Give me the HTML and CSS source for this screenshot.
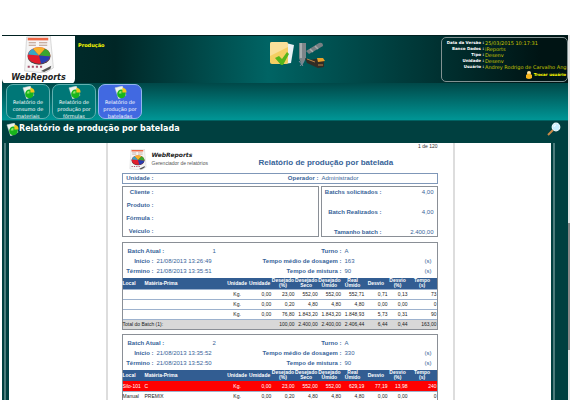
FILE: index.html
```html
<!DOCTYPE html>
<html lang="pt-BR">
<head>
<meta charset="utf-8">
<title>WebReports</title>
<link rel="stylesheet" href="styles.css">
</head>
<body>
<svg class="defs" aria-hidden="true">
  <symbol id="report" viewBox="0 0 30 36">
    <path d="M3 1 26 0 29 31 21 36 1 34Z" fill="#f5f5f5" stroke="#ccc" stroke-width=".7"/>
    <path d="M4 3h20" stroke="#e64" stroke-width="2.5"/>
    <path d="M5 6.500h7M15 6.500h8M5 9h7M15 9h8" stroke="#b98" stroke-width="1"/>
    <ellipse cx="15" cy="20" rx="11" ry="8" fill="#444"/>
    <ellipse cx="15" cy="19" rx="11" ry="8" fill="#e11d2c"/>
    <path d="M15 19 9 12.300Q15 9.500 21 12.300Z" fill="#f6b22a"/>
    <path d="M15 19 21 12.300Q26.500 15 26 20Z" fill="#3aa62f"/>
    <path d="M15 19 26 20Q24.500 25.500 17 26.900Z" fill="#263fb0"/>
    <path d="M15 19 4.200 18Q5 14.500 9 12.300Z" fill="#37a6c4"/>
    <path d="M4 30h2m2 0h2m2 0h2m2 0h2" stroke="#a6506a" stroke-width="2"/>
    <path d="M17 34 27 29 26 32 20 35Z" fill="#555"/>
  </symbol>
  <symbol id="sheet" viewBox="0 0 14 14">
    <path d="M1 2 9 0l4 10-8 4Z" fill="#eef3ee" stroke="#bcc" stroke-width=".5"/>
    <circle cx="8" cy="8.500" r="4.600" fill="#18b51c"/>
    <path d="M5 8a3.500 3.500 0 0 1 3-3v3Z" fill="#8fe86a"/>
    <path d="M9 7V2a5 5 0 0 1 4.500 5Z" fill="#f3c71d"/>
  </symbol>
</svg>
<div class="app">
  <header class="top">
    <div class="brand"><svg class="brand-pic"><use href="#report"/></svg><span>WebReports</span></div>
    <p class="module">Produção</p>
    <nav class="modules" aria-label="Módulos">
      <button type="button" aria-label="Relatórios"><svg width="26" height="26" viewBox="0 0 26 26">
        <path d="M17 3 25 5 22 23 15 24Z" fill="#e8f1f5"/>
        <rect x="1" y="2" width="18" height="22" rx="2" fill="#f4cf62"/>
        <path d="M1 4q0-2 2-2h14q2 0 2 2v3L1 16Z" fill="#fae09a"/>
        <path d="M6 18 10 16 13 19 18 12 20 14 14 25H12Z" fill="#56b51b"/>
      </svg></button>
      <button type="button" aria-label="Produção"><svg width="28" height="28" viewBox="0 0 28 28">
        <path d="M2 3h7v15L5 26 2 18Z" fill="#7d8589"/><path d="M3 3h2v15H3Z" fill="#a7acae"/>
        <path d="M9 11 22 3q4-1 4 3L12 14Z" fill="#777f83"/><path d="M13 9 16 12M18 6l3 3" stroke="#aaa" stroke-width="1.500"/>
        <path d="M8 18 12 20 19 19 27 19 27 27 21 28 10 23Z" fill="#332c24"/>
        <path d="M20 18h6l2 3-7 1Z" fill="#e7a12a"/><path d="M10 19 18 22M21 25h5" stroke="#b98448"/>
        <path d="M2 21 6 26M3 26 7 21" stroke="#789"/>
      </svg></button>
    </nav>
    <section class="session">
      <dl>
        <dt>Data da Versão :</dt><dd>25/03/2015 10:17:31</dd>
        <dt>Banco Dados :</dt><dd>iReports</dd>
        <dt>Tipo :</dt><dd>Desenv</dd>
        <dt>Unidade :</dt><dd>Desenv</dd>
        <dt>Usuário :</dt><dd>Andrey Rodrigo de Carvalho Ang</dd>
      </dl>
      <a href="#"><svg width="6" height="8" viewBox="0 0 6 8"><circle cx="3" cy="2" r="2" fill="#ffe6a5"/><path d="M0 7V4q3-3 6 0v3Q3 9 0 7Z" fill="#f5b51e"/></svg>Trocar usuário</a>
    </section>
  </header>
  <nav class="toolbar" aria-label="Relatórios">
    <button type="button"><svg><use href="#sheet"/></svg>Relatório de<br>consumo de<br>materiais</button>
    <button type="button"><svg><use href="#sheet"/></svg>Relatório de<br>produção por<br>fórmulas</button>
    <button type="button" class="active"><svg><use href="#sheet"/></svg>Relatório de<br>produção por<br>bateladas</button>
  </nav>
  <div class="heading">
    <svg class="heading-pic"><use href="#sheet"/></svg>
    <h1>Relatório de produção por batelada</h1>
    <button type="button" aria-label="Pesquisar"><svg width="14" height="14" viewBox="0 0 14 14"><path d="M1 13 6 8" stroke="#c98a48" stroke-width="2"/><circle cx="9" cy="5" r="3.800" fill="#c9efff" stroke="#edf8fc" stroke-width="1.200"/><path d="M7 5q0-2 2-2" stroke="#fff" fill="none"/></svg></button>
  </div>
  <div class="stage">
    <main class="viewer">
      <article class="paper">
        <p class="pages">1 de 120</p>
        <header class="report-head">
          <svg class="report-pic"><use href="#report"/></svg>
          <div class="report-brand"><strong>WebReports</strong><span>Gerenciador de relatórios</span></div>
          <h2>Relatório de produção por batelada</h2>
        </header>
        <div class="box unit"><b>Unidade :</b><b>Operador :</b><span>Administrador</span></div>
        <div class="pair">
          <div class="box client"><b>Cliente :</b><b>Produto :</b><b>Fórmula :</b><b>Veículo :</b></div>
          <div class="box totals"><b>Batchs solicitados :</b><span>4,00</span><b>Batch Realizados :</b><span>4,00</span><b>Tamanho batch :</b><span>2.400,00</span></div>
        </div>
        <section class="box batch">
          <div class="facts">
            <b class="first">Batch Atual :</b><span class="num">1</span><b>Turno :</b><span>A</span><span></span>
            <b>Início :</b><span>21/08/2013 13:26:49</span><b>Tempo médio de dosagem :</b><span>163</span><span>(s)</span>
            <b>Término :</b><span>21/08/2013 13:35:51</span><b>Tempo de mistura :</b><span>90</span><span>(s)</span>
          </div>
          <table>
            <colgroup><col class="c-local"><col class="c-name"><col class="c-unit"><col class="c-val"><col class="c-val"><col class="c-val"><col class="c-val"><col class="c-val"><col class="c-val"><col class="c-dev"><col class="c-time"></colgroup>
            <thead><tr><th>Local</th><th>Matéria-Prima</th><th>Unidade</th><th>Umidade</th><th>Desejado<br>(%)</th><th>Desejado<br>Seco</th><th>Desejado<br>Úmido</th><th>Real<br>Úmido</th><th>Desvio</th><th>Desvio<br>(%)</th><th>Tempo<br>(s)</th></tr></thead>
            <tbody>
              <tr><td></td><td></td><td>Kg.</td><td>0,00</td><td>23,00</td><td>552,00</td><td>552,00</td><td>552,71</td><td>0,71</td><td>0,13</td><td>73</td></tr>
              <tr><td></td><td></td><td>Kg.</td><td>0,00</td><td>0,20</td><td>4,80</td><td>4,80</td><td>4,80</td><td>0,00</td><td>0,00</td><td>0</td></tr>
              <tr><td></td><td></td><td>Kg.</td><td>0,00</td><td>76,80</td><td>1.843,20</td><td>1.843,20</td><td>1.848,93</td><td>5,73</td><td>0,31</td><td>90</td></tr>
            </tbody>
            <tfoot><tr><td colspan="4">Total do Batch (1):</td><td>100,00</td><td>2.400,00</td><td>2.400,00</td><td>2.406,44</td><td>6,44</td><td>0,44</td><td>163,00</td></tr></tfoot>
          </table>
        </section>
        <section class="box batch">
          <div class="facts">
            <b class="first">Batch Atual :</b><span class="num">2</span><b>Turno :</b><span>A</span><span></span>
            <b>Início :</b><span>21/08/2013 13:35:52</span><b>Tempo médio de dosagem :</b><span>330</span><span>(s)</span>
            <b>Término :</b><span>21/08/2013 13:52:50</span><b>Tempo de mistura :</b><span>90</span><span>(s)</span>
          </div>
          <table>
            <colgroup><col class="c-local"><col class="c-name"><col class="c-unit"><col class="c-val"><col class="c-val"><col class="c-val"><col class="c-val"><col class="c-val"><col class="c-val"><col class="c-dev"><col class="c-time"></colgroup>
            <thead><tr><th>Local</th><th>Matéria-Prima</th><th>Unidade</th><th>Umidade</th><th>Desejado<br>(%)</th><th>Desejado<br>Seco</th><th>Desejado<br>Úmido</th><th>Real<br>Úmido</th><th>Desvio</th><th>Desvio<br>(%)</th><th>Tempo<br>(s)</th></tr></thead>
            <tbody>
              <tr class="alert"><td>Silo-101</td><td>C</td><td>Kg.</td><td>0,00</td><td>23,00</td><td>552,00</td><td>552,00</td><td>629,19</td><td>77,19</td><td>13,98</td><td>240</td></tr>
              <tr><td>Manual</td><td>PREMIX</td><td>Kg.</td><td>0,00</td><td>0,20</td><td>4,80</td><td>4,80</td><td>4,80</td><td>0,00</td><td>0,00</td><td>0</td></tr>
            </tbody>
          </table>
        </section>
      </article>
    </main>
  </div>
</div>
<div class="track"><div class="thumb"></div></div>
</body>
</html>
```

FILE: styles.css
```css
* { box-sizing: border-box; }

body {
  margin: 0;
  padding: 35px 0 0 2px;
  height: 100vh;
  display: flex;
  overflow: hidden;
  background: #fff;
  font-family: "DejaVu Sans", sans-serif;
}

p, h1, h2, dl, dd { margin: 0; }
button { font-family: inherit; border: 0; padding: 0; background: none; }
svg { display: block; flex: none; }
.defs { position: absolute; width: 0; height: 0; }

.app {
  flex: 1;
  min-width: 0;
  display: flex;
  flex-direction: column;
  background: #004040;
}

/* top bar */
.top {
  flex: none;
  height: 48px;
  display: grid;
  grid-template-columns: 73px minmax(0, 4fr) auto minmax(0, 5fr);
  border-top: 1px solid #002020;
  background: linear-gradient(90deg, #003030, #002626 20%, #006464 47%, #004a4a 62%, #001414 95%, #001414);
}

.brand {
  height: 49px;
  display: flex;
  flex-direction: column;
  align-items: center;
  background: #fff;
  border-radius: 0 0 6px 6px;
  font-size: 8px;
  line-height: 10px;
  font-weight: bold;
  font-style: oblique;
  color: #222;
}
.brand-pic { width: 36px; height: 37px; }

.module {
  padding: 5px 3px;
  font-size: 5px;
  line-height: 8px;
  font-weight: bold;
  color: #ff0;
}

.modules { display: flex; align-items: flex-start; gap: 2px; padding-top: 4px; }

.session {
  justify-self: end;
  width: 127px;
  margin: 1px 0 3px;
  padding: 2px 1px;
  overflow: hidden;
  border: 1px solid #829292;
  border-radius: 5px;
  font-size: 4px;
  line-height: 6px;
}
.session dl { display: grid; grid-template-columns: 41px 1fr; column-gap: 1px; white-space: nowrap; }
.session dt { justify-self: end; font-weight: bold; color: #fff; }
.session dd { font-size: 5px; color: #c8c800; }
.session a {
  display: flex;
  justify-content: flex-end;
  align-items: center;
  gap: 2px;
  height: 9px;
  font-weight: bold;
  color: #ff0;
  text-decoration: none;
}

/* report buttons */
.toolbar {
  flex: none;
  height: 37px;
  display: flex;
  gap: 2px;
  padding: 1px 4px;
  background: linear-gradient(#004848, #009696);
}
.toolbar button {
  width: 44px;
  border: 1px solid #62b0b0;
  border-radius: 7px;
  background: #007777;
  color: #fff;
  font-size: 5px;
  line-height: 7px;
  white-space: nowrap;
}
.toolbar svg { width: 13px; height: 13px; margin: 1px auto 0; }
.toolbar .active { background: #4169e1; border-color: #92b5ee; }

.heading {
  flex: none;
  height: 23px;
  display: flex;
  align-items: center;
  padding: 0 7px 6px 4px;
  border-top: 1px solid #006262;
}
.heading-pic { width: 13px; height: 13px; }
.heading h1 { flex: 1; font-size: 8px; line-height: 10px; color: #fff; }

/* report viewer */
.stage {
  flex: 1;
  min-height: 0;
  display: flex;
  margin: 0 13px 0 2px;
  border: solid #4c7c7c;
  border-width: 0 2px;
  padding: 0 2px 0 3px;
}
.viewer { flex: 1; overflow: hidden; background: #fff; }

.paper {
  max-width: 349px;
  margin: 0 auto;
  padding: 0 15px 0 14px;
  border: solid #ddd;
  border-width: 0 2px;
  font-family: "Liberation Sans", sans-serif;
  font-size: 6px;
  color: #376398;
}

.pages { text-align: right; font-size: 5px; line-height: 6px; color: #333; }

.report-head { display: flex; height: 24px; padding-left: 6px; }
.report-pic { width: 20px; height: 21px; }
.report-brand { width: 111px; padding: 2px 4px; font-size: 5px; line-height: 8px; color: #555; }
.report-brand strong {
  display: block;
  font-family: "DejaVu Sans", sans-serif;
  font-size: 6px;
  font-style: oblique;
  color: #222;
}
.report-head h2 { font-size: 8px; line-height: 28px; white-space: nowrap; }

.box { border: 1px solid #8a8f96; }

.unit {
  display: grid;
  grid-template-columns: 31px 1fr 115px;
  column-gap: 3px;
  line-height: 9px;
  border-color: #7f97b8;
}
.unit b { text-align: right; }

.pair { display: grid; grid-template-columns: 197px 1fr; gap: 2px; margin: 2px 0 5px; }
.client { display: grid; grid-template-rows: repeat(4, 13px); line-height: 10px; height: 51px; }
.client b { width: 31px; text-align: right; }
.totals {
  display: grid;
  grid-template-columns: 60px 1fr;
  grid-template-rows: repeat(3, 20px);
  line-height: 10px;
  height: 51px;
  padding-right: 3px;
}
.totals b, .totals span { text-align: right; }

.batch { margin-bottom: 4px; }
.facts {
  display: grid;
  grid-template-columns: 31px 1fr 84px 77px 12px;
  column-gap: 3px;
  line-height: 10px;
  padding: 3px 0 2px;
}
.facts b { text-align: right; white-space: nowrap; }
.facts .first { text-align: left; padding-left: 5px; }
.facts .num { padding-left: 56px; }

table {
  width: 100%;
  table-layout: fixed;
  border-collapse: collapse;
  font-size: 5px;
  color: #222;
}
.c-local { width: 7%; }
.c-name { width: 26%; }
.c-unit { width: 7%; }
.c-val { width: 7.4%; }
.c-dev { width: 6.4%; }
th, td { padding: 0; white-space: nowrap; }
th { height: 11px; line-height: 5px; background: #325d92; color: #fff; }
td { height: 10px; line-height: 8px; text-align: right; border-top: 1px solid #9db2ce; }
th:nth-child(-n+2), td:nth-child(-n+2) { text-align: left; }
tbody td:nth-child(3) { text-align: center; }
tfoot td { background: #d8d8d8; }
tfoot td:nth-child(2) { text-align: right; }
.alert td { background: #f00; color: #fff; border-color: #f00; }

/* page scrollbar */
.track { width: 2px; flex: none; background: #e4e4e4; padding-top: 188px; }
.thumb { height: 127px; background: #888; }
```
